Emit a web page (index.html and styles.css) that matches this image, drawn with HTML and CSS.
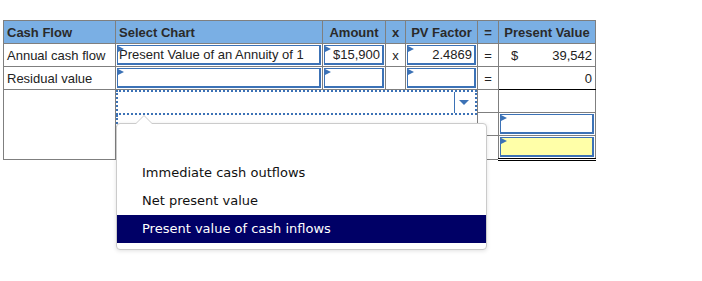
FILE: index.html
```html
<!doctype html>
<html lang="en-US">

  <head>
    <meta charset="utf-8">
    <meta name="viewport" content="width=device-width, initial-scale=1">
    <title>Present Value Worksheet</title>
    <link rel="stylesheet" href="styles.css">
  </head>

  <body>
    <div class="sheet-wrap">
      <table class="sheet">
        <colgroup>
          <col class="c-flow">
          <col class="c-chart">
          <col class="c-amount">
          <col class="c-op">
          <col class="c-factor">
          <col class="c-eq">
          <col class="c-value">
        </colgroup>
        <tr class="head">
          <th class="left">Cash Flow</th>
          <th class="left">Select Chart</th>
          <th>Amount</th>
          <th>x</th>
          <th>PV Factor</th>
          <th>=</th>
          <th>Present Value</th>
        </tr>
        <tr>
          <td class="label">Annual cash flow</td>
          <td class="in"><div class="field">Present Value of an Annuity of 1</div></td>
          <td class="in"><div class="field num">$15,900</div></td>
          <td class="op">x</td>
          <td class="in"><div class="field num">2.4869</div></td>
          <td class="op">=</td>
          <td class="total"><span>$</span><span>39,542</span></td>
        </tr>
        <tr>
          <td class="label">Residual value</td>
          <td class="in"><div class="field"></div></td>
          <td class="in"><div class="field num"></div></td>
          <td class="op"></td>
          <td class="in"><div class="field num"></div></td>
          <td class="op">=</td>
          <td class="total underline"><span></span><span>0</span></td>
        </tr>
        <tr class="sub">
          <td class="label" rowspan="3"></td>
          <td class="picker" colspan="4" rowspan="3">
            <div class="select">
              <span class="fill"></span>
              <span class="arrow"></span>
            </div>
            <div class="below"></div>
          </td>
          <td class="op"></td>
          <td class="blank"></td>
        </tr>
        <tr class="sub">
          <td class="op"></td>
          <td class="in"><div class="field"></div></td>
        </tr>
        <tr class="sub">
          <td class="op"></td>
          <td class="in last"><div class="field yellow"></div></td>
        </tr>
      </table>

      <div class="menu">
        <div class="item"></div>
        <div class="item">Immediate cash outflows</div>
        <div class="item">Net present value</div>
        <div class="item active">Present value of cash inflows</div>
      </div>
    </div>
  </body>

</html>
```

FILE: styles.css
```css
html,
body {
  margin: 0;
  padding: 0;
  background: #fff;
}

body {
  min-height: 281px;
  box-sizing: border-box;
  padding: 20px 0 0 3px;
  font-family: "Liberation Sans", Arial, sans-serif;
  font-size: 13px;
  color: #222;
}

.sheet-wrap {
  position: relative;
  width: 600px;
  height: 240px;
}

.sheet {
  border-collapse: collapse;
  table-layout: fixed;
  width: 593px;
}

.c-flow { width: 112px; }
.c-chart { width: 207px; }
.c-amount { width: 63px; }
.c-op { width: 20px; }
.c-factor { width: 72px; }
.c-eq { width: 21px; }
.c-value { width: 97px; }

.sheet th,
.sheet td {
  border: 1px solid #7f7f7f;
  padding: 0 3px;
  height: 23px;
  box-sizing: border-box;
  white-space: nowrap;
  overflow: hidden;
}

.head th {
  background: #7aafe4;
  color: #2a2a2a;
  font-weight: bold;
  text-align: center;
  height: 23px;
}

.head th.left {
  text-align: left;
}

.sheet td.op {
  text-align: center;
  padding: 0;
}

.sheet td.in {
  padding: 1px;
}

.field {
  position: relative;
  height: 20px;
  box-sizing: border-box;
  border: solid #3c72b6;
  border-width: 1px 2px 2px 1px;
  padding: 0 2px 0 1px;
  line-height: 18px;
}

.field::before {
  content: "";
  position: absolute;
  left: 0;
  top: 0;
  border-left: 6px solid #3c72b6;
  border-top: 3px solid transparent;
  border-bottom: 3px solid transparent;
}

.field.num {
  text-align: right;
}

.field.yellow {
  background: #ffffa8;
}

.sheet td.total {
  padding: 0 3px 0 12px;
}

.sheet td.total span:last-child {
  float: right;
}

.sheet td.underline {
  border-bottom: 1px solid #000;
}

.sheet td.blank {
  border-top: 1px solid #000;
}

.sheet td.last {
  border-bottom: 3px double #000;
}

.sheet .sub td {
  height: 23px;
}

.sheet td.picker {
  padding: 0;
  vertical-align: top;
  border-left: 0;
}

.select {
  display: flex;
  height: 25px;
  box-sizing: border-box;
  border: 2px dotted #3c72b6;
}

.select .fill {
  flex: 1;
  border-right: 1px solid #3c72b6;
}

.select .arrow {
  width: 20px;
  position: relative;
}

.select .arrow::after {
  content: "";
  position: absolute;
  left: 4px;
  top: 8px;
  border-top: 5px solid #3c72b6;
  border-left: 5px solid transparent;
  border-right: 5px solid transparent;
}

.below {
  height: 40px;
  border-left: 2px dotted #3c72b6;
}

.menu {
  position: absolute;
  left: 113px;
  top: 103px;
  width: 369px;
  padding: 7px 0 6px;
  background: #fff;
  border: 1px solid #cbcbcb;
  border-radius: 4px;
  box-shadow: 0 1px 4px rgba(0, 0, 0, 0.12);
  font-family: "DejaVu Sans", Verdana, sans-serif;
  font-size: 13px;
  color: #111;
}

.menu::before,
.menu::after {
  content: "";
  position: absolute;
  left: 18px;
  border-left: 9px solid transparent;
  border-right: 9px solid transparent;
}

.menu::before {
  top: -9px;
  border-bottom: 9px solid #cbcbcb;
}

.menu::after {
  top: -8px;
  left: 19px;
  border-left-width: 8px;
  border-right-width: 8px;
  border-bottom: 8px solid #fff;
}

.item {
  height: 28px;
  line-height: 28px;
  padding-left: 25px;
}

.item.active {
  background: #000066;
  color: #fff;
}
```
